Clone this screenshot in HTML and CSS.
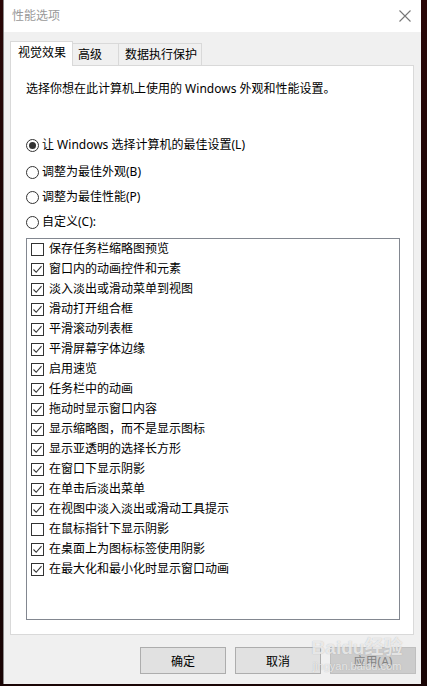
FILE: index.html
```html
<!DOCTYPE html>
<html lang="zh-CN">
<head>
    <meta charset="UTF-8">
    <meta name="viewport" content="width=device-width, initial-scale=1.0">
    <title>性能选项</title>
    <link rel="stylesheet" href="styles.css">
</head>
<body>
    <div class="window">
        <div class="titlebar">
            <span class="title">性能选项</span>
            <svg class="close" width="12" height="12" viewBox="0 0 12 12">
                <path d="M0.5 0.5 L11.5 11.5 M11.5 0.5 L0.5 11.5" stroke="#777" stroke-width="1.1" fill="none"/>
            </svg>
        </div>
        <div class="content">
            <div class="tabs">
                <div class="tab active">视觉效果</div>
                <div class="tab tab-adv">高级</div>
                <div class="tab tab-dep">数据执行保护</div>
            </div>
            <div class="panel">
                <p class="desc">选择你想在此计算机上使用的 Windows 外观和性能设置。</p>
                <div class="radios">
                    <label class="radio checked"><span class="dot"></span>让 Windows 选择计算机的最佳设置(L)</label>
                    <label class="radio"><span class="dot"></span>调整为最佳外观(B)</label>
                    <label class="radio"><span class="dot"></span>调整为最佳性能(P)</label>
                    <label class="radio"><span class="dot"></span>自定义(C):</label>
                </div>
                <div class="listbox" id="list"></div>
            </div>
            <div class="buttons">
                <div class="btn">确定</div>
                <div class="btn">取消</div>
                <div class="btn disabled">应用(A)</div>
            </div>
        </div>
        <div class="watermark">
            <div class="wm-logo">Bai<span class="paw">du</span>经验</div>
            <div class="wm-url">jingyan.baidu.com</div>
        </div>
    </div>

    <script>
        const items = [
            ['保存任务栏缩略图预览', false],
            ['窗口内的动画控件和元素', true],
            ['淡入淡出或滑动菜单到视图', true],
            ['滑动打开组合框', true],
            ['平滑滚动列表框', true],
            ['平滑屏幕字体边缘', true],
            ['启用速览', true],
            ['任务栏中的动画', true],
            ['拖动时显示窗口内容', true],
            ['显示缩略图，而不是显示图标', true],
            ['显示亚透明的选择长方形', true],
            ['在窗口下显示阴影', true],
            ['在单击后淡出菜单', true],
            ['在视图中淡入淡出或滑动工具提示', true],
            ['在鼠标指针下显示阴影', false],
            ['在桌面上为图标标签使用阴影', true],
            ['在最大化和最小化时显示窗口动画', true]
        ];
        const list = document.getElementById('list');
        const tick = '<svg width="11" height="11" viewBox="0 0 11 11"><path d="M1.5 5.5 L4.2 8.3 L9.5 2.2" stroke="#333" stroke-width="1.1" fill="none"/></svg>';
        items.forEach(([text, on]) => {
            const row = document.createElement('div');
            row.className = 'item';
            row.innerHTML = `<span class="box">${on ? tick : ''}</span><span>${text}</span>`;
            list.appendChild(row);
        });
    </script>
</body>
</html>
```

FILE: styles.css
```css
body {
    margin: 0;
    width: 427px;
    height: 686px;
    overflow: hidden;
    background: linear-gradient(180deg, #2a0707, #120404 60%, #1a0505);
    font-family: "Noto Sans", "Noto Sans CJK SC", sans-serif;
    font-size: 12px;
    color: #000;
}
.window {
    position: relative;
    margin-left: 3px;
    width: 418px;
    height: 684px;
    background: #f0f0f0;
    border-left: 1px solid #8a8a8a;
    box-sizing: border-box;
    display: flex;
    flex-direction: column;
}
.titlebar {
    height: 32px;
    background: #fff;
    display: flex;
    align-items: center;
    justify-content: space-between;
    padding: 0 8px 0 8px;
}
.title {
    color: #999;
    font-size: 12px;
    line-height: 16px;
}
.close {
    margin-right: 2px;
}
.content {
    padding: 9px 7px 0 6px;
    display: flex;
    flex-direction: column;
}
.tabs {
    display: flex;
    align-items: flex-end;
    height: 24px;
}
.tab {
    height: 22px;
    line-height: 22px;
    border: 1px solid #d9d9d9;
    border-bottom: none;
    box-sizing: border-box;
    background: #f0f0f0;
    padding-left: 5px;
    font-size: 12px;
}
.tab.active {
    height: 25px;
    line-height: 22px;
    width: 63px;
    background: #fff;
    padding-left: 7px;
    margin-bottom: -1px;
    position: relative;
    z-index: 1;
}
.tab-adv {
    width: 46px;
    border-left: none;
}
.tab-dep {
    width: 83px;
    border-left: none;
    padding-left: 6px;
}
.panel {
    height: 570px;
    box-sizing: border-box;
    background: #fff;
    border: 1px solid #d9d9d9;
    padding: 15px 13px 0 15px;
}
.desc {
    margin: 0;
    line-height: 16px;
}
.radios {
    margin-top: 40px;
    display: flex;
    flex-direction: column;
    gap: 9px;
}
.radio {
    display: flex;
    align-items: center;
    height: 16px;
    line-height: 16px;
}
.radios .radio:first-child {
    margin-bottom: 2px;
}
.dot {
    width: 13px;
    height: 13px;
    box-sizing: border-box;
    border: 1px solid #333;
    border-radius: 50%;
    margin-right: 3px;
    display: flex;
    align-items: center;
    justify-content: center;
}
.radio.checked .dot::after {
    content: "";
    width: 7px;
    height: 7px;
    border-radius: 50%;
    background: #333;
}
.listbox {
    margin-top: 8px;
    height: 382px;
    box-sizing: border-box;
    border: 1px solid #828790;
    padding: 0 0 0 4px;
}
.item {
    height: 20px;
    display: flex;
    align-items: center;
    line-height: 16px;
}
.box {
    width: 13px;
    height: 13px;
    box-sizing: border-box;
    border: 1px solid #333;
    background: #fff;
    margin-right: 5px;
    display: flex;
    align-items: center;
    justify-content: center;
}
.buttons {
    display: flex;
    justify-content: flex-end;
    gap: 9px;
    margin-top: 12px;
    margin-right: -2px;
}
.btn {
    width: 86px;
    height: 27px;
    box-sizing: border-box;
    background: #e1e1e1;
    border: 1px solid #adadad;
    display: flex;
    align-items: center;
    justify-content: center;
}
.btn.disabled {
    background: #cccccc;
    border-color: #bfbfbf;
    color: #838383;
}
.watermark {
    position: absolute;
    left: 305px;
    top: 636px;
    width: 96px;
    text-align: center;
    white-space: nowrap;
    color: rgba(255, 255, 255, 0.7);
    text-shadow: 0 0 1px rgba(140, 140, 140, 0.6);
    pointer-events: none;
}
.wm-logo {
    font-family: "Liberation Sans", "Noto Sans CJK SC", sans-serif;
    font-size: 19px;
    font-weight: bold;
    line-height: 24px;
}
.wm-url {
    font-family: "Liberation Sans", sans-serif;
    font-size: 11px;
    line-height: 12px;
    margin-top: 0;
}
```
